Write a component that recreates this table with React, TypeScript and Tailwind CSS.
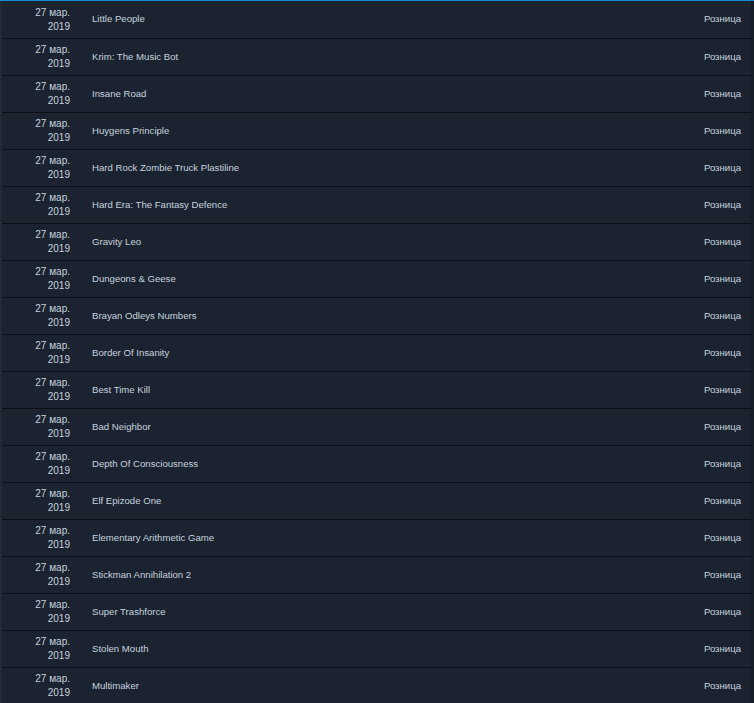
const games = [
  "Little People",
  "Krim: The Music Bot",
  "Insane Road",
  "Huygens Principle",
  "Hard Rock Zombie Truck Plastiline",
  "Hard Era: The Fantasy Defence",
  "Gravity Leo",
  "Dungeons & Geese",
  "Brayan Odleys Numbers",
  "Border Of Insanity",
  "Best Time Kill",
  "Bad Neighbor",
  "Depth Of Consciousness",
  "Elf Epizode One",
  "Elementary Arithmetic Game",
  "Stickman Annihilation 2",
  "Super Trashforce",
  "Stolen Mouth",
  "Multimaker",
]

export default function App() {
  return (
    <div className="h-[703px] w-[754px] overflow-hidden bg-[#1b2230] font-['Liberation_Sans',Arial,sans-serif] text-[10px] text-[#c6d4df]">
      <div className="h-px bg-[#1a8ad4]" />
      <div className="flex">
        <div className="w-[2px] shrink-0 bg-[#222a37]" />
        <div className="flex-1">
          {games.map((title, i) => (
            <div
              key={title}
              className={`flex items-center border-b border-[#0b0e13] ${i === 0 ? "h-[38px]" : "h-[37px]"}`}
            >
              <div className="w-[68px] shrink-0 text-right leading-[14px]">
                <div>27 мар.</div>
                <div>2019</div>
              </div>
              <div className="ml-[22px] flex-1 text-[9.6px] leading-[12px] pb-px">{title}</div>
              <div className="pr-[10px] text-[9.6px]">Розница</div>
            </div>
          ))}
        </div>
        <div className="w-[3px] shrink-0 bg-[#171d27]" />
      </div>
    </div>
  )
}
